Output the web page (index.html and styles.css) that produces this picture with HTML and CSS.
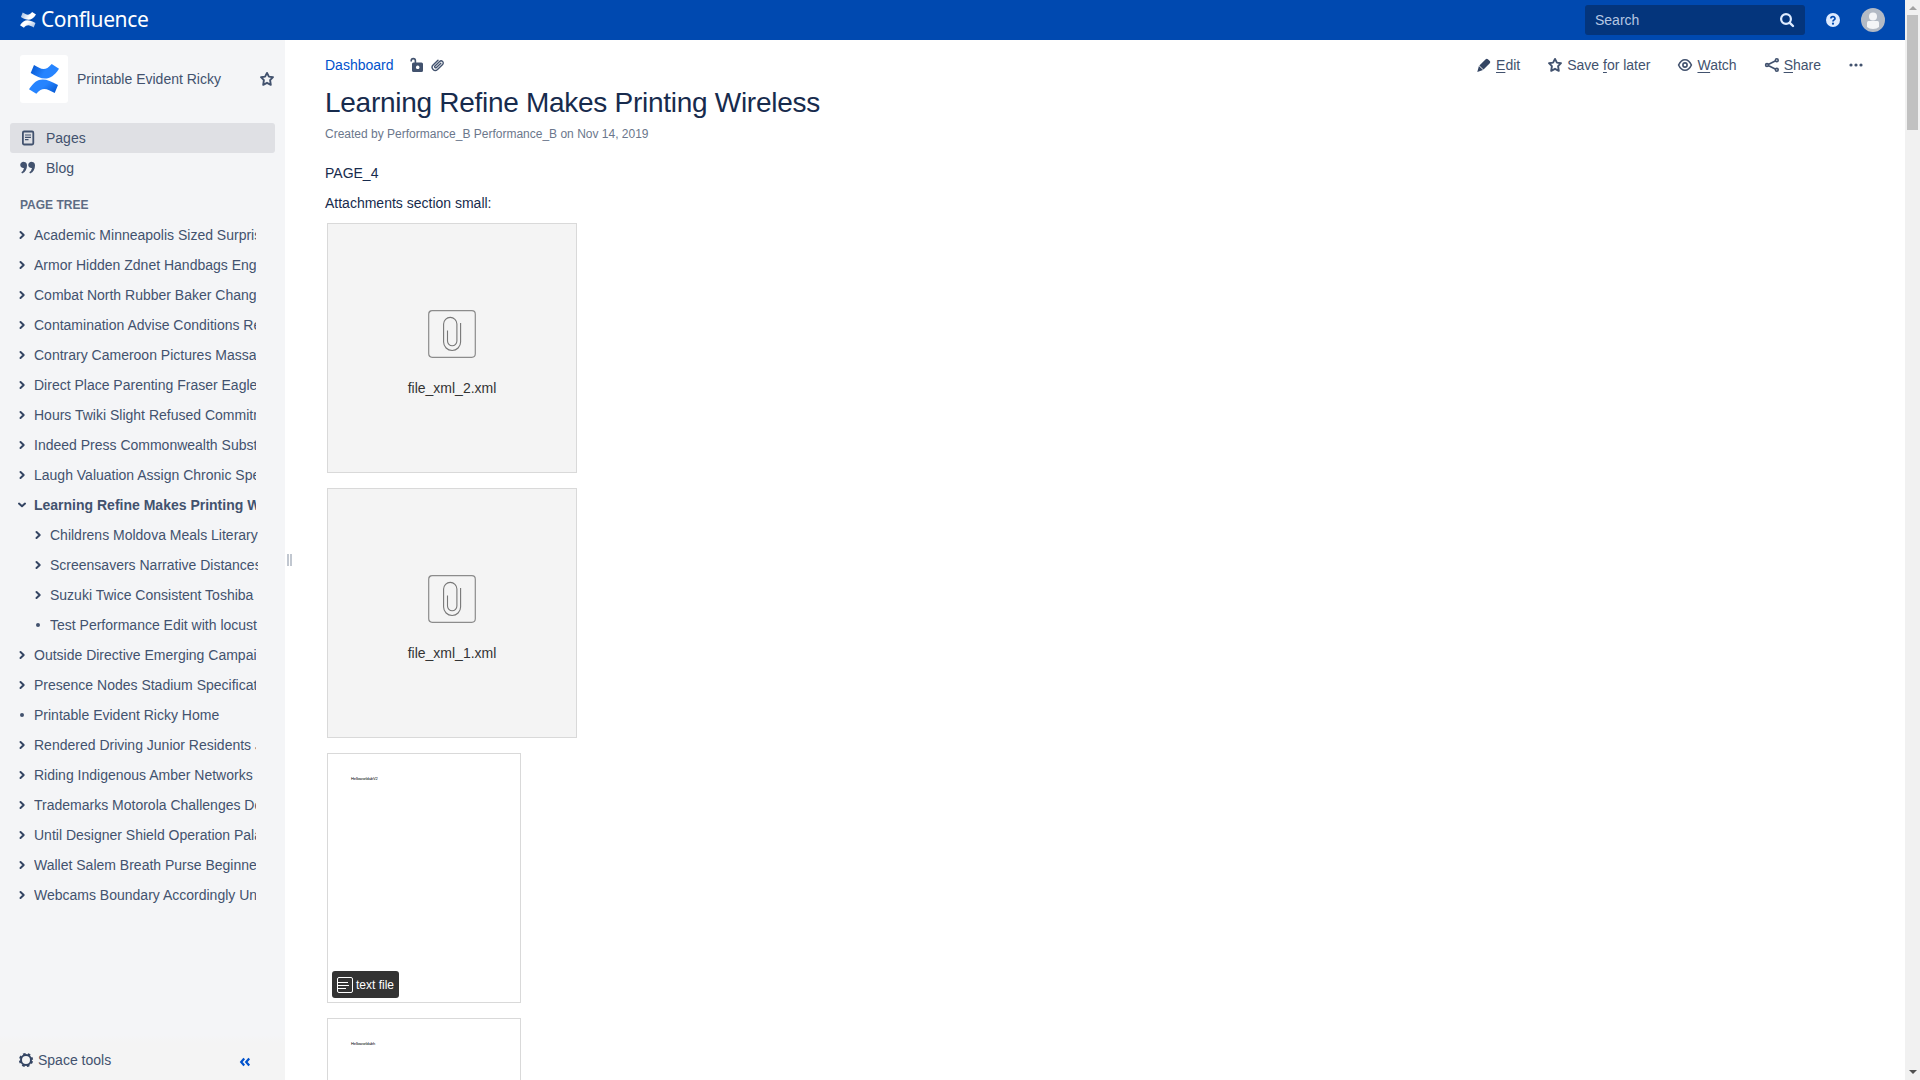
FILE: index.html
```html
<!DOCTYPE html>
<html lang="en">
<head>
<meta charset="utf-8">
<title>Learning Refine Makes Printing Wireless - Confluence</title>
<link rel="stylesheet" href="styles.css">
</head>
<body>
<svg width="0" height="0" class="defs">
  <defs>
    <linearGradient id="blueA" x1="0" y1="0" x2="1" y2="0.3"><stop offset="0" stop-color="#0052cc"/><stop offset=".6" stop-color="#2684ff"/></linearGradient>
    <linearGradient id="blueB" x1="1" y1="1" x2="0" y2="0.4"><stop offset="0" stop-color="#0052cc"/><stop offset=".6" stop-color="#2684ff"/></linearGradient>
    <linearGradient id="whiteA" x1="0" y1="0" x2="1" y2="0.3"><stop offset="0" stop-color="#fff" stop-opacity=".6"/><stop offset=".7" stop-color="#fff"/></linearGradient>
    <linearGradient id="whiteB" x1="1" y1="1" x2="0" y2="0.4"><stop offset="0" stop-color="#fff" stop-opacity=".6"/><stop offset=".7" stop-color="#fff"/></linearGradient>
  </defs>
  <symbol id="right" viewBox="0 0 8 10"><path d="M2.500 2 5.700 5 2.500 8" fill="none" stroke="#344563" stroke-width="2" stroke-linecap="round" stroke-linejoin="round"/></symbol>
  <symbol id="down" viewBox="0 0 8 10"><path d="M1 3.600 4 6.300 7 3.600" fill="none" stroke="#344563" stroke-width="2" stroke-linecap="round" stroke-linejoin="round"/></symbol>
  <symbol id="dot" viewBox="0 0 8 10"><circle cx="4" cy="5" r="2" fill="#42526e"/></symbol>
  <symbol id="star" viewBox="0 0 16 16"><path d="M8 1.900 9.900 5.600 14 6.200 11.100 9.200 11.800 13.800 8 11.800 4.200 13.800 4.900 9.200 2 6.200 6.100 5.600Z" fill="none" stroke="#42526e" stroke-width="1.900" stroke-linejoin="round"/></symbol>
  <symbol id="file" viewBox="0 0 48 48"><rect x=".7" y=".7" width="46.600" height="46.600" rx="3.500" fill="none" stroke="#8c8c8c" stroke-width="1.200"/><path d="M19.500 20.500V31a4.700 4.700 0 0 0 9.400 0V14a6.600 6.600 0 0 0-13.300 0v18a8.500 8.500 0 0 0 17 0V13" fill="none" stroke="#777" stroke-width="1.100"/></symbol>
</svg>
<header class="topbar">
  <a class="brand">
    <svg width="16" height="16" viewBox="0 0 30 30"><path d="M5 1C12 5 16 8 22.700 0L30 4.700C22 17 14 17 1.700 9.500z" fill="url(#whiteA)"/><path d="M25.700 29C18 25 14 22 7.300 29.700L0 25C8 13 15 13 29 20.500z" fill="url(#whiteB)"/></svg>
    <span>Confluence</span>
  </a>
  <div class="search"><span>Search</span>
    <svg width="16" height="16" viewBox="0 0 16 16"><circle cx="7" cy="7" r="4.900" fill="none" stroke="#deebff" stroke-width="2.200"/><path d="m10.800 10.800 3.200 3.200" stroke="#deebff" stroke-width="2.400" stroke-linecap="round"/></svg>
  </div>
  <svg class="help" width="14" height="14" viewBox="0 0 14 14"><circle cx="7" cy="7" r="7" fill="#deebff"/><path d="M4.900 5.600C4.900 3 9 3 9 5.400 9 7 7 6.800 7 8.600" fill="none" stroke="#0049b0" stroke-width="1.700"/><circle cx="7" cy="10.700" r="1.100" fill="#0049b0"/></svg>
  <svg class="avatar" width="24" height="24" viewBox="0 0 24 24"><circle cx="12" cy="12" r="12" fill="#b3bac5"/><circle cx="12" cy="8.500" r="4" fill="#f4f5f7"/><path d="M6 14.500q0-1.500 1.500-1.500h9q1.500 0 1.500 1.500V19q-2 2-6 2t-6-2z" fill="#f4f5f7"/></svg>
</header>
<div class="body">
  <aside class="sidebar">
    <div class="space">
      <div class="space-logo"><svg width="30" height="30" viewBox="0 0 30 30"><path d="M5 1C12 5 16 8 22.700 0L30 4.700C22 17 14 17 1.700 9z" fill="url(#blueA)"/><path d="M25.700 29C18 25 14 22 7.300 29.700L0 25.300C8 13 15 13 29 21z" fill="url(#blueB)"/></svg></div>
      <span class="space-name">Printable Evident Ricky</span>
      <svg width="16" height="16"><use href="#star"/></svg>
    </div>
    <nav class="links">
      <a class="link active"><svg width="16" height="16" viewBox="0 0 16 16"><rect x="2.900" y="1.500" width="10.400" height="13" rx="1.200" fill="none" stroke="#42526e" stroke-width="1.800"/><path d="M5 5h6M5 7.300h6M5 9.600h3.500" stroke="#42526e" stroke-width="1.200"/></svg>Pages</a>
      <a class="link"><svg width="16" height="16" viewBox="0 0 16 16"><path d="M4.200 2a3.100 3.100 0 1 0-.2 6q-.5 3-2.700 4.300l.8 1.200C5.500 12.200 7 9 7 5.500 7 3.200 6 2 4.200 2Z" fill="#42526e"/><path d="M12.200 2a3.100 3.100 0 1 0-.2 6q-.5 3-2.700 4.300l.8 1.200C13.500 12.200 15 9 15 5.500 15 3.200 14 2 12.200 2Z" fill="#42526e"/></svg>Blog</a>
    </nav>
    <h2 class="tree-title">PAGE TREE</h2>
    <ul class="tree">
      <li><svg><use href="#right"/></svg><span>Academic Minneapolis Sized Surprise</span></li>
      <li><svg><use href="#right"/></svg><span>Armor Hidden Zdnet Handbags Engine</span></li>
      <li><svg><use href="#right"/></svg><span>Combat North Rubber Baker Changes</span></li>
      <li><svg><use href="#right"/></svg><span>Contamination Advise Conditions Reply</span></li>
      <li><svg><use href="#right"/></svg><span>Contrary Cameroon Pictures Massage</span></li>
      <li><svg><use href="#right"/></svg><span>Direct Place Parenting Fraser Eagles</span></li>
      <li><svg><use href="#right"/></svg><span>Hours Twiki Slight Refused Commitment</span></li>
      <li><svg><use href="#right"/></svg><span>Indeed Press Commonwealth Substance</span></li>
      <li><svg><use href="#right"/></svg><span>Laugh Valuation Assign Chronic Special</span></li>
      <li class="current"><svg><use href="#down"/></svg><span>Learning Refine Makes Printing Wireless</span></li>
      <li class="child"><svg><use href="#right"/></svg><span>Childrens Moldova Meals Literary</span></li>
      <li class="child"><svg><use href="#right"/></svg><span>Screensavers Narrative Distances</span></li>
      <li class="child"><svg><use href="#right"/></svg><span>Suzuki Twice Consistent Toshiba</span></li>
      <li class="child"><svg><use href="#dot"/></svg><span>Test Performance Edit with locust</span></li>
      <li><svg><use href="#right"/></svg><span>Outside Directive Emerging Campaign</span></li>
      <li><svg><use href="#right"/></svg><span>Presence Nodes Stadium Specification</span></li>
      <li><svg><use href="#dot"/></svg><span>Printable Evident Ricky Home</span></li>
      <li><svg><use href="#right"/></svg><span>Rendered Driving Junior Residents J</span></li>
      <li><svg><use href="#right"/></svg><span>Riding Indigenous Amber Networks</span></li>
      <li><svg><use href="#right"/></svg><span>Trademarks Motorola Challenges Debt</span></li>
      <li><svg><use href="#right"/></svg><span>Until Designer Shield Operation Palace</span></li>
      <li><svg><use href="#right"/></svg><span>Wallet Salem Breath Purse Beginner</span></li>
      <li><svg><use href="#right"/></svg><span>Webcams Boundary Accordingly Unit</span></li>
    </ul>
    <div class="tools">
      <svg width="16" height="16" viewBox="0 0 16 16"><circle cx="8" cy="8" r="5" fill="none" stroke="#344563" stroke-width="2"/><circle cx="8" cy="8" r="6.200" fill="none" stroke="#344563" stroke-width="1.800" stroke-dasharray="2.600 2.269" stroke-dashoffset="-1.100"/></svg>
      <span>Space tools</span>
      <svg class="collapse" width="12" height="12" viewBox="0 0 12 12"><path d="M5.200 2.500 2.200 6l3 3.500M10.200 2.500 7.200 6l3 3.500" fill="none" stroke="#0052cc" stroke-width="2.200"/></svg>
    </div>
  </aside>
  <div class="grip"><i></i><i></i></div>
  <main class="main">
    <div class="bar">
      <div class="crumbs"><a>Dashboard</a>
        <svg width="14" height="16" viewBox="0 0 14 16"><path d="M1.200 4.500V3.700a2.100 2.100 0 0 1 4.200 0V6" fill="none" stroke="#42526e" stroke-width="1.600"/><path fill-rule="evenodd" d="M3.500 5.500h8q1.500 0 1.500 1.500v6.500q0 1.500-1.500 1.500h-8Q2 15 2 13.500V7q0-1.500 1.500-1.500Zm4.200 3a1.800 1.800 0 1 0 .01 0Z" fill="#42526e"/></svg>
        <svg class="clip" width="14" height="14" viewBox="0 0 14 14"><path d="m9.800 5.200-4.300 4.300a.9.900 0 0 1-1.500-1.500L8.600 3.400a2 2 0 0 1 3 3L6.500 11.500a3 3 0 0 1-4.400-4.400L7 2.200" fill="none" stroke="#42526e" stroke-width="1.400" stroke-linecap="round"/></svg>
      </div>
      <div class="actions">
        <a><svg width="16" height="16" viewBox="0 0 16 16"><path d="m3.400 8.500 6.300-6.200q1-1 2.200-.1l1.900 1.900q1 1.100 0 2.200L7.500 12.600zM2.900 9l4.100 4.100L1.300 15z" fill="#344563"/></svg><span><u>E</u>dit</span></a>
        <a><svg width="16" height="16"><use href="#star"/></svg><span>Save <u>f</u>or later</span></a>
        <a><svg width="16" height="16" viewBox="0 0 16 16"><path d="M1.600 8Q4 2.700 8 2.700T14.400 8Q12 13.300 8 13.300T1.600 8Z" fill="none" stroke="#42526e" stroke-width="1.600"/><circle cx="8" cy="8" r="2.100" fill="none" stroke="#42526e" stroke-width="1.600"/></svg><span><u>W</u>atch</span></a>
        <a><svg width="16" height="16" viewBox="0 0 16 16"><path d="m3.200 8 9.500-4.700M3.200 8l9.500 4.700" stroke="#42526e" stroke-width="1.600"/><g fill="#fff" stroke="#42526e" stroke-width="1.600"><circle cx="3" cy="8" r="1.400"/><circle cx="12.800" cy="3.200" r="1.400"/><circle cx="12.800" cy="12.800" r="1.400"/></g></svg><span><u>S</u>hare</span></a>
        <a><svg width="16" height="16" viewBox="0 0 16 16" fill="#42526e"><circle cx="3" cy="8" r="1.600"/><circle cx="8" cy="8" r="1.600"/><circle cx="13" cy="8" r="1.600"/></svg></a>
      </div>
    </div>
    <h1>Learning Refine Makes Printing Wireless</h1>
    <p class="meta">Created by Performance_B Performance_B on Nov 14, 2019</p>
    <p class="text">PAGE_4</p>
    <p class="text">Attachments section small:</p>
    <div class="files">
      <div class="card"><svg width="48" height="48"><use href="#file"/></svg><span>file_xml_2.xml</span></div>
      <div class="card"><svg width="48" height="48"><use href="#file"/></svg><span>file_xml_1.xml</span></div>
      <div class="card doc"><small>HelloworldabV2</small>
        <div class="badge"><svg width="16" height="16" viewBox="0 0 16 16"><rect x=".5" y=".5" width="15" height="15" rx="1.500" fill="none" stroke="#fff"/><path d="M1 5.500h10M1 8.500h11M1 11.500h8" stroke="#fff"/></svg>text file</div>
      </div>
      <div class="card doc"><small>Helloworldabh</small></div>
    </div>
  </main>
</div>
<div class="scrollbar"><i class="up"></i><div class="thumb"></div><i class="dn"></i></div>
</body>
</html>
```
FILE: styles.css
```css
* { box-sizing: border-box; }
body {
  margin: 0;
  width: 1920px;
  height: 1080px;
  overflow: hidden;
  display: grid;
  grid-template: 40px 1040px / 1905px 15px;
  font: 14px/20px "Liberation Sans", Arial, sans-serif;
  color: #172b4d;
  background: #fff;
}
svg { display: block; flex: none; }
.defs { position: absolute; }
h1, h2, p, ul { margin: 0; padding: 0; }

.topbar {
  background: #0049b0;
  display: flex;
  align-items: center;
  padding: 0 20px;
}
.brand { display: flex; align-items: center; gap: 5px; margin-right: auto; color: #fff; }
.brand svg { margin-bottom: 1px; }
.brand span { font: 21px/38px "Noto Sans", sans-serif; letter-spacing: -0.4px; height: 40px; }
.search {
  width: 220px;
  height: 30px;
  border-radius: 3px;
  background: #04357c;
  color: #b5c7e3;
  display: flex;
  align-items: center;
  justify-content: space-between;
  padding: 0 10px;
}
.help { margin-left: 21px; }
.avatar { margin-left: 21px; }

.body { display: flex; grid-row: 2; min-width: 0; }
.sidebar {
  width: 285px;
  background: #f4f5f7;
  color: #42526e;
  display: flex;
  flex-direction: column;
}
.space { display: flex; align-items: center; padding: 15px 10px 0 20px; }
.space-logo {
  width: 48px;
  height: 48px;
  border-radius: 3px;
  background: #fff;
  display: grid;
  place-items: center;
}
.space-name { margin: 0 auto 0 9px; }
.links { padding: 20px 10px 0; }
.link { display: flex; align-items: center; height: 30px; padding-left: 10px; gap: 10px; border-radius: 3px; }
.active { background: #dfe0e4; }
.tree-title { font-size: 12px; line-height: 20px; color: #5e6c84; padding: 12px 20px 0; }
.tree { list-style: none; padding: 5px 0 0 18px; }
.tree li { display: flex; align-items: center; height: 30px; width: 238px; gap: 8px; white-space: nowrap; }
.tree svg { width: 8px; height: 10px; }
.tree span { flex: 1; overflow: hidden; }
.tree .child { width: 240px; padding-left: 16px; }
.current { font-weight: bold; }
.tools {
  margin-top: auto;
  height: 45px;
  padding: 5px 0 0 18px;
  display: flex;
  align-items: center;
  gap: 4px;
  color: #42526e;
  background: linear-gradient(#f4f5f7, #f4f4f4 8px);
}
.collapse { margin: 4px 0 0 124px; }
.grip { width: 10px; display: flex; gap: 1px; padding-left: 2px; align-items: flex-start; }
.grip i { width: 2px; height: 12px; margin-top: 514px; background: #c1c7d0; }

.main { flex: 1; padding: 10px 40px 0 30px; overflow: hidden; }
.bar { display: flex; justify-content: space-between; height: 30px; align-items: center; }
.crumbs { display: flex; align-items: center; }
.crumbs a { color: #0052cc; margin-right: 16px; }
.clip { margin-left: 7px; }
.actions { display: flex; gap: 27px; color: #42526e; padding-right: 1px; }
.actions a { display: flex; align-items: center; gap: 4px; }
.actions u { text-underline-offset: 2px; text-decoration-thickness: 1px; }
h1 { font-size: 28px; font-weight: 400; line-height: 32px; letter-spacing: -0.28px; margin-top: 7px; }
.meta { font-size: 12px; line-height: 20px; color: #6b778c; margin: 5px 0 19px; }
.text { margin-bottom: 10px; }
.files { display: flex; flex-direction: column; gap: 15px; padding-left: 2px; }
.card {
  width: 250px;
  height: 250px;
  flex: none;
  border: 1px solid #d9d9d9;
  background: #f4f4f4;
  color: #333;
  display: flex;
  flex-direction: column;
  align-items: center;
  padding-top: 86px;
}
.card > span { margin-top: 20px; }
.card.doc { width: 194px; background: #fff; padding: 21px 4px 4px; align-items: flex-start; }
.doc small { font-size: 4px; line-height: 8px; letter-spacing: -0.1px; margin-left: 19px; color: #000; }
.badge {
  margin-top: auto;
  width: 67px;
  height: 27px;
  border-radius: 3px;
  background: #333;
  color: #fff;
  font-size: 12px;
  display: flex;
  align-items: center;
  padding-left: 5px;
  gap: 3px;
  white-space: nowrap;
}

.scrollbar {
  grid-row: 1 / 3;
  grid-column: 2;
  background: #f1f1f1;
  display: flex;
  flex-direction: column;
  align-items: center;
}
.scrollbar i { border: 4px solid transparent; width: 0; height: 0; }
.scrollbar .up { border-bottom-color: #a3a3a3; border-top: 0; margin: 6px 0 5px; }
.scrollbar .dn { border-top-color: #505050; border-bottom: 0; margin: auto 0 6px; }
.thumb { width: 11px; height: 115px; background: #c1c1c1; }
```
